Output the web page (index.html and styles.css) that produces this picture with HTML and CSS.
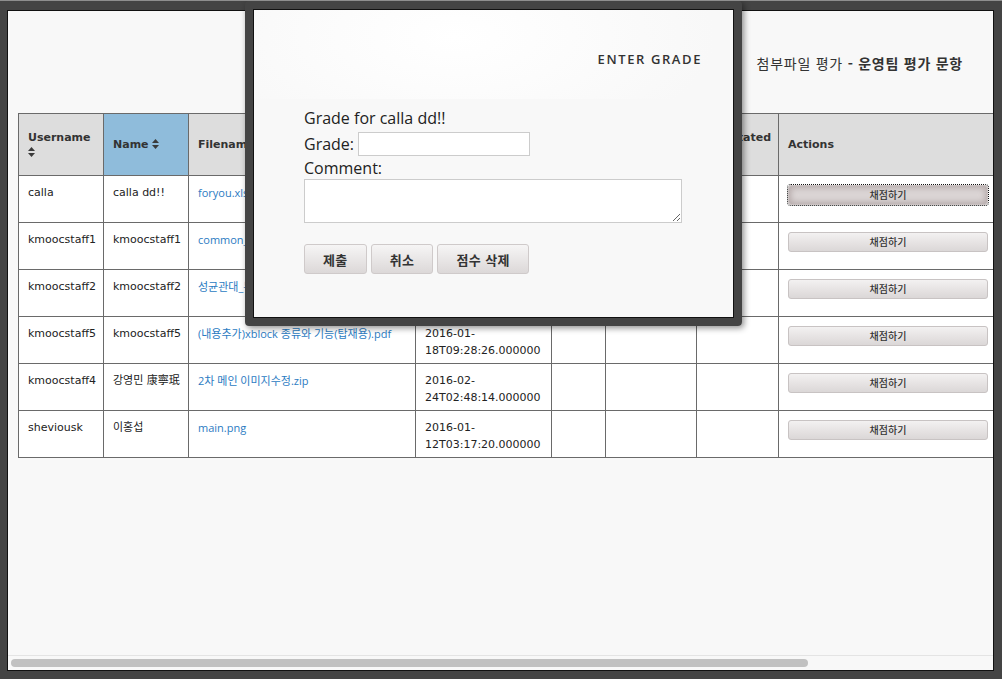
FILE: index.html
```html
<!DOCTYPE html>
<html lang="ko">
<head>
<meta charset="utf-8">
<title>Enter Grade</title>
<link rel="stylesheet" href="styles.css">
</head>
<body>
<div class="frame">
  <div class="page">
    <div class="page-header">
      <h2 class="page-title">첨부파일 평가 <strong>- 운영팀 평가 문항</strong></h2>
    </div>
    <table class="grid">
      <colgroup>
        <col class="c-user"><col class="c-name"><col class="c-file"><col class="c-date"><col class="c-grade"><col class="c-comment"><col class="c-annot"><col class="c-actions">
      </colgroup>
      <thead>
        <tr>
          <th>Username <svg class="sort" viewBox="0 0 7 10" width="7" height="10"><path d="M0 4 3.5 0 7 4Z M0 6 3.5 10 7 6Z"/></svg></th>
          <th class="sorted">Name <svg class="sort" viewBox="0 0 7 10" width="7" height="10"><path d="M0 4 3.5 0 7 4Z M0 6 3.5 10 7 6Z"/></svg></th>
          <th>Filename <svg class="sort" viewBox="0 0 7 10" width="7" height="10"><path d="M0 4 3.5 0 7 4Z M0 6 3.5 10 7 6Z"/></svg></th>
          <th>Uploaded <svg class="sort" viewBox="0 0 7 10" width="7" height="10"><path d="M0 4 3.5 0 7 4Z M0 6 3.5 10 7 6Z"/></svg></th>
          <th>Grade</th>
          <th>Instructor's comments</th>
          <th>Annotated <svg class="sort" viewBox="0 0 7 10" width="7" height="10"><path d="M0 4 3.5 0 7 4Z M0 6 3.5 10 7 6Z"/></svg></th>
          <th>Actions</th>
        </tr>
      </thead>
      <tbody>
        <tr>
          <td>calla</td><td>calla dd!!</td><td><a href="#">foryou.xlsx</a></td>
          <td>2016-01-<wbr>20T05:11:42.000000</td><td></td><td></td><td></td>
          <td><button class="grade-btn focused">채점하기</button></td>
        </tr>
        <tr>
          <td>kmoocstaff1</td><td>kmoocstaff1</td><td><a href="#">common_image.png</a></td>
          <td>2016-01-<wbr>19T02:10:33.000000</td><td></td><td></td><td></td>
          <td><button class="grade-btn">채점하기</button></td>
        </tr>
        <tr>
          <td>kmoocstaff2</td><td>kmoocstaff2</td><td><a href="#">성균관대_뉴스.pdf</a></td>
          <td>2016-01-<wbr>18T11:02:51.000000</td><td></td><td></td><td></td>
          <td><button class="grade-btn">채점하기</button></td>
        </tr>
        <tr>
          <td>kmoocstaff5</td><td>kmoocstaff5</td><td><a href="#">(내용추가)xblock 종류와 기능(탑재용).pdf</a></td>
          <td>2016-01-<wbr>18T09:28:26.000000</td><td></td><td></td><td></td>
          <td><button class="grade-btn">채점하기</button></td>
        </tr>
        <tr>
          <td>kmoocstaff4</td><td>강영민 康寧珉</td><td><a href="#">2차 메인 이미지수정.zip</a></td>
          <td>2016-02-<wbr>24T02:48:14.000000</td><td></td><td></td><td></td>
          <td><button class="grade-btn">채점하기</button></td>
        </tr>
        <tr>
          <td>sheviousk</td><td>이홍섭</td><td><a href="#">main.png</a></td>
          <td>2016-01-<wbr>12T03:17:20.000000</td><td></td><td></td><td></td>
          <td><button class="grade-btn">채점하기</button></td>
        </tr>
      </tbody>
    </table>
  </div>
  <div class="hscroll"><div class="hscroll-thumb"></div></div>
</div>

<div class="modal">
  <div class="modal-inner">
    <div class="modal-header">
      <h3 class="modal-title">ENTER GRADE</h3>
    </div>
    <div class="modal-body">
      <p class="grade-for">Grade for calla dd!!</p>
      <div class="grade-row">
        <label class="field-label" for="grade">Grade:</label>
        <input id="grade" class="grade-input" type="text">
      </div>
      <label class="field-label comment-label" for="comment">Comment:</label>
      <textarea id="comment" class="comment-input"></textarea>
      <div class="modal-actions">
        <button class="modal-btn">제출</button>
        <button class="modal-btn">취소</button>
        <button class="modal-btn">점수 삭제</button>
      </div>
    </div>
  </div>
</div>
</body>
</html>
```

FILE: styles.css
```css
* { box-sizing: border-box; }

html, body {
  margin: 0;
  height: 679px;
  overflow: hidden;
}

body {
  background: #444444;
  border-top: 1px solid #8e8e8e;
  position: relative;
  font-family: "DejaVu Sans", Verdana, "Noto Sans CJK KR", sans-serif;
  color: #333;
}

.frame {
  margin: 9px 0 0 7px;
  width: 987px;
  height: 661px;
  border: 1px solid #111;
  background: #f8f8f8;
  display: flex;
  flex-direction: column;
  overflow: hidden;
}

.page {
  flex: 1;
  overflow: hidden;
  padding-left: 10px;
}

.page-header {
  height: 102px;
  display: flex;
  align-items: center;
  justify-content: flex-end;
  padding-right: 30px;
}

.page-title {
  margin: 0;
  font-family: "Noto Sans CJK KR", sans-serif;
  font-size: 14px;
  font-weight: 400;
  color: #333;
  letter-spacing: 0.75px;
  padding-top: 2px;
}

.page-title strong { font-weight: 700; }

/* table */
.grid {
  border-collapse: collapse;
  table-layout: fixed;
  width: 990px;
  background: #fff;
}

.c-user { width: 85px; }
.c-name { width: 85px; }
.c-file { width: 227px; }
.c-date { width: 136px; }
.c-grade { width: 54px; }
.c-comment { width: 91px; }
.c-annot { width: 82px; }
.c-actions { width: 230px; }

.grid th, .grid td {
  border: 1px solid #6a6a6a;
  text-align: left;
  overflow: hidden;
}

.grid th { padding: 7px 9px; }
.grid td { padding: 8px 3px 4px 9px; }

.grid thead tr { height: 62px; }
.grid tbody tr { height: 47px; }

.grid th {
  background: #dddddd;
  font-size: 11px;
  font-weight: 700;
  line-height: 15px;
  color: #333;
  vertical-align: middle;
}

.grid th.sorted { background: #8fbcdb; }

.sort {
  fill: #3a3a3a;
  vertical-align: -1px;
}

.grid td {
  font-size: 11px;
  line-height: 17px;
  vertical-align: top;
  color: #222;
}

.grid td a {
  font-family: "Open Sans", "Noto Sans CJK KR", sans-serif;
  font-size: 11px;
  color: #2b7bc2;
  text-decoration: none;
  white-space: nowrap;
}

.grade-btn {
  display: block;
  width: 200px;
  height: 20px;
  margin-top: 1px;
  padding: 0;
  border: 1px solid #c8c3c3;
  border-radius: 3px;
  background: linear-gradient(#f3f1f1, #dbd7d7);
  font-family: "Noto Sans CJK KR", sans-serif;
  font-size: 10px;
  font-weight: 500;
  color: #333;
  line-height: 18px;
}

.grade-btn.focused {
  background: #dcd6d6;
  border-color: #cbc3c3;
  box-shadow: inset 0 0 6px 2px rgba(150, 135, 135, 0.55);
  outline: 1px dotted #111;
  outline-offset: 0;
}

/* scrollbar */
.hscroll {
  height: 15px;
  border-top: 1px solid #e4e4e4;
  background: #f8f8f8;
  padding: 3px 0 0 3px;
  flex: none;
}

.hscroll-thumb {
  width: 797px;
  height: 8px;
  border-radius: 4px;
  background: #c1c1c1;
}

/* modal */
.modal {
  position: absolute;
  left: 245px;
  top: 0;
  width: 497px;
  height: 325px;
  border: 8px solid #444;
  border-radius: 4px;
  box-shadow: 2px 2px 6px rgba(0, 0, 0, 0.45);
}

.modal-inner {
  height: 100%;
  border: 1px solid #111;
  background: #f8f8f8;
  font-family: "Open Sans", "Noto Sans CJK KR", sans-serif;
}

.modal-header {
  height: 89px;
  display: flex;
  align-items: center;
  justify-content: flex-end;
  padding: 8px 31px 0 0;
  background: radial-gradient(ellipse 260px 120px at 42% 30%, #ffffff 0%, #fcfcfc 45%, #f8f8f8 100%);
}

.modal-title {
  margin: 0;
  font-size: 13px;
  font-weight: 600;
  letter-spacing: 1.6px;
  color: #333;
}

.modal-body {
  padding: 8px 0 0 50px;
  font-size: 16px;
  color: #222;
}

.grade-for {
  margin: 0;
  line-height: 22px;
}

.grade-row {
  display: flex;
  align-items: center;
  gap: 4px;
  height: 26px;
  margin-top: 2px;
}

.field-label {
  line-height: 22px;
}

.comment-label { display: block; }

.grade-input {
  width: 172px;
  height: 24px;
  border: 1px solid #cccccc;
  background: #fff;
  padding: 2px 4px;
  font: inherit;
  font-size: 13px;
}

.comment-input {
  display: block;
  width: 378px;
  height: 44px;
  border: 1px solid #cccccc;
  background: #fff;
  margin: 0;
  font: inherit;
  font-size: 13px;
}

.modal-actions {
  display: flex;
  gap: 4px;
  margin-top: 21px;
}

.modal-btn {
  height: 30px;
  padding: 0 18px;
  border: 1px solid #cfcaca;
  border-radius: 3px;
  background: linear-gradient(#f6f5f5, #dcd8d8);
  font-family: "Noto Sans CJK KR", sans-serif;
  font-size: 13px;
  font-weight: 700;
  letter-spacing: 0.4px;
  color: #333;
}
```
